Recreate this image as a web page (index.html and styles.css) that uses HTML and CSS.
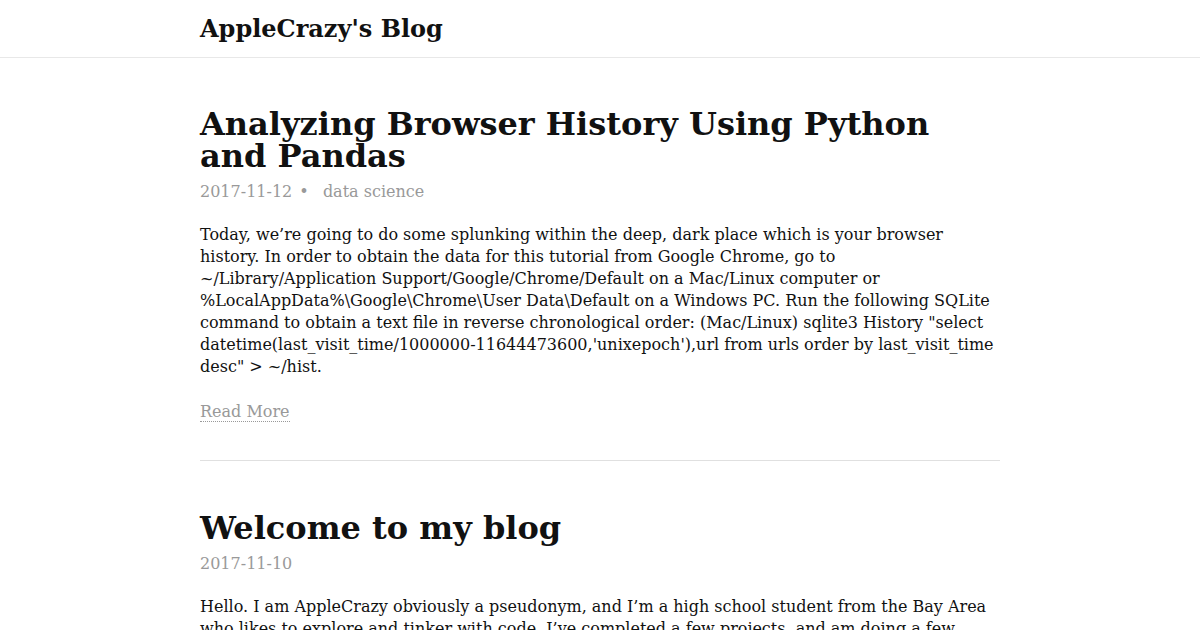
FILE: index.html
```html
<!DOCTYPE html>
<html lang="en">
<head>
<meta charset="utf-8">
<title>AppleCrazy's Blog</title>
<link rel="stylesheet" href="styles.css">
</head>
<body>
<header class="site-header">
  <div class="wrapper">
    <a class="site-title" href="#">AppleCrazy's Blog</a>
  </div>
</header>
<main class="page-content">
  <div class="wrapper">
    <article class="post">
      <h2 class="post-title">Analyzing Browser History Using Python and Pandas</h2>
      <div class="post-meta">2017-11-12 <span class="sep">•</span> <span class="tag">data science</span></div>
      <p class="post-excerpt">Today, we’re going to do some splunking within the deep, dark place which is your browser history. In order to obtain the data for this tutorial from Google Chrome, go to ~/Library/Application Support/Google/Chrome/Default on a Mac/Linux computer or %LocalAppData%\Google\Chrome\User Data\Default on a Windows PC. Run the following SQLite command to obtain a text file in reverse chronological order: (Mac/Linux) sqlite3 History "select datetime(last_visit_time/1000000-11644473600,'unixepoch'),url from urls order by last_visit_time desc" &gt; ~/hist.</p>
      <a class="read-more" href="#">Read More</a>
    </article>
    <hr class="divider">
    <article class="post">
      <h2 class="post-title">Welcome to my blog</h2>
      <div class="post-meta">2017-11-10</div>
      <p class="post-excerpt">Hello. I am AppleCrazy obviously a pseudonym, and I’m a high school student from the Bay Area who likes to explore and tinker with code. I’ve completed a few projects, and am doing a few more, which I will be writing about on this blog.</p>
      <a class="read-more" href="#">Read More</a>
    </article>
  </div>
</main>
</body>
</html>
```
FILE: styles.css
```css
html, body {
  margin: 0;
  padding: 0;
  background: #fff;
}
body {
  font-family: "DejaVu Serif", serif;
  font-size: 16px;
  line-height: 22px;
  color: #111;
}
.wrapper {
  width: 800px;
  margin: 0 auto;
}
.site-header {
  height: 57px;
  border-bottom: 1px solid #e8e8e8;
  display: flex;
  align-items: center;
}
.site-title {
  font-size: 24px;
  font-weight: bold;
  line-height: 30px;
  color: #111;
  text-decoration: none;
  display: block;
}
.page-content {
  padding-top: 50px;
}
.post-title {
  font-size: 32px;
  line-height: 32px;
  font-weight: bold;
  margin: 0;
  color: #111;
}
.post-meta {
  margin-top: 9px;
  color: #999;
}
.sep {
  margin: 0 9px 0 2px;
}
.post-excerpt {
  margin: 21px 0 23px;
}
.read-more {
  color: #999;
  text-decoration: none;
  border-bottom: 1px dotted #999;
}
.divider {
  border: 0;
  border-top: 1px solid #e0e0e0;
  margin: 37px 0 51px;
}
```
